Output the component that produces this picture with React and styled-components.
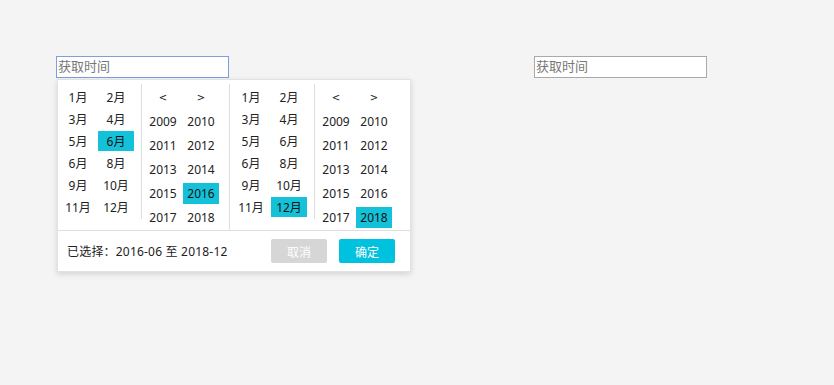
import styled, { createGlobalStyle } from 'styled-components';

const GlobalStyle = createGlobalStyle`
  html, body {
    margin: 0;
    background: #f4f4f4;
    font-family: "Noto Sans", "Noto Sans CJK SC", sans-serif;
  }
`;

const Page = styled.div`
  display: flex;
  align-items: flex-start;
  gap: 123px;
  min-height: 385px;
  box-sizing: border-box;
  padding: 56px 0 0 56px;
`;

const Picker = styled.div`
  display: flex;
  flex-direction: column;
`;

const Input = styled.input`
  box-sizing: border-box;
  display: block;
  width: 173px;
  height: 22px;
  margin: 0;
  padding: 0 1px 3px;
  border: 1px solid ${p => (p.$active ? '#7d9fdb' : '#a9a9a9')};
  background: #fff;
  font-family: "Noto Sans CJK SC", sans-serif;
  font-size: 13px;
  line-height: 17px;
  outline: none;
  &::placeholder {
    color: #777;
  }
`;

const Dropdown = styled.div`
  box-sizing: border-box;
  width: 354px;
  height: 193px;
  margin: 1px 0 0 1px;
  background: #fff;
  border: 1px solid #e2e2e2;
  box-shadow: 0 2px 6px rgba(0, 0, 0, 0.14);
  display: flex;
  flex-direction: column;
`;

const Body = styled.div`
  display: flex;
  align-items: flex-start;
  height: 150px;
`;

const Panel = styled.div`
  box-sizing: border-box;
  width: ${p => p.$w};
  height: ${p => p.$h};
  margin-top: 4px;
  padding: 3px 0 0 ${p => p.$pl || '3px'};
  border-right: ${p => (p.$last ? 'none' : '1px solid #dedede')};
  flex: ${p => (p.$last ? '1' : 'none')};
`;

const Grid = styled.div`
  display: grid;
  grid-template-columns: 36px 36px;
  grid-auto-rows: ${p => p.$row};
  column-gap: 2px;
  row-gap: ${p => p.$gap};
`;

const Cell = styled.div`
  display: flex;
  align-items: center;
  justify-content: center;
  font-size: 12px;
  color: ${p => (p.$on ? '#111' : '#222')};
  background: ${p => (p.$on ? '#13c2d9' : 'transparent')};
  cursor: pointer;
`;

const Arrow = styled(Cell)`
  font-size: 10px;
  font-family: "DejaVu Sans", sans-serif;
`;

const Footer = styled.div`
  flex: 1;
  display: flex;
  align-items: center;
  padding: 0 15px 0 9px;
  border-top: 1px solid #dedede;
  font-size: 12px;
  color: #222;
`;

const Summary = styled.span`
  flex: 1;
  letter-spacing: 0.2px;
`;

const Button = styled.button`
  width: 56px;
  height: 24px;
  margin-left: ${p => (p.$gap ? '12px' : '0')};
  border: none;
  border-radius: 2px;
  background: ${p => (p.$primary ? '#00c1de' : '#d6d6d6')};
  color: #fff;
  font-family: "Noto Sans CJK SC", sans-serif;
  font-size: 12px;
  padding: 0;
`;

const months = ['1月', '2月', '3月', '4月', '5月', '6月', '6月', '8月', '9月', '10月', '11月', '12月'];
const years = [2009, 2010, 2011, 2012, 2013, 2014, 2015, 2016, 2017, 2018];

const MonthPanel = ({ picked, w, pl }) => (
  <Panel $w={w} $h="135px" $pl={pl}>
    <Grid $row="20px" $gap="2px">
      {months.map((m, i) => (
        <Cell key={i} $on={i === picked}>{m}</Cell>
      ))}
    </Grid>
  </Panel>
);

const YearPanel = ({ picked, last }) => (
  <Panel $w="88px" $h="146px" $last={last}>
    <Grid $row="21px" $gap="3px">
      <Arrow>&lt;</Arrow>
      <Arrow>&gt;</Arrow>
      {years.map(y => (
        <Cell key={y} $on={y === picked}>{y}</Cell>
      ))}
    </Grid>
  </Panel>
);

export default function App() {
  return (
    <>
      <GlobalStyle />
      <Page>
        <Picker>
          <Input $active placeholder="获取时间" />
          <Dropdown>
            <Body>
              <MonthPanel picked={5} w="84px" pl="2px" />
              <YearPanel picked={2016} />
              <MonthPanel picked={11} w="85px" />
              <YearPanel picked={2018} last />
            </Body>
            <Footer>
              <Summary>已选择：2016-06 至 2018-12</Summary>
              <Button>取消</Button>
              <Button $gap $primary>确定</Button>
            </Footer>
          </Dropdown>
        </Picker>
        <Picker>
          <Input placeholder="获取时间" />
        </Picker>
      </Page>
    </>
  );
}
